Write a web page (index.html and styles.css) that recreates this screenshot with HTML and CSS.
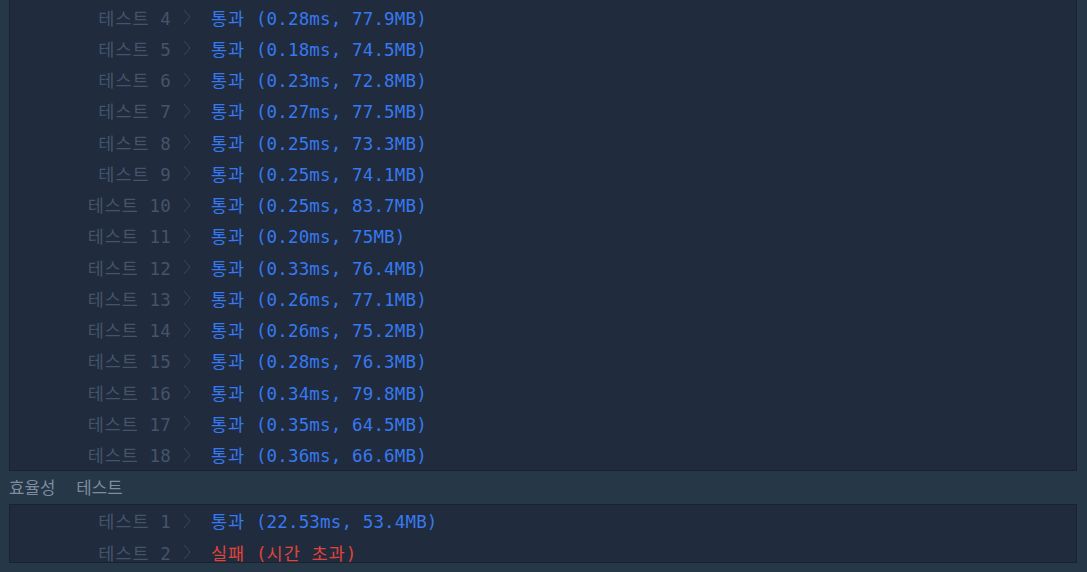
FILE: index.html
```html
<!DOCTYPE html>
<html>
<head>
    <title>채점 결과</title>
    <link rel="stylesheet" href="styles.css">
</head>
<body>
    <div class="panel panel-main">
        <div class="row"><span class="label"><span class="ko">테스트</span> 4</span><span class="arrow"><svg width="8" height="16" viewBox="0 0 8 16"><polyline points="1,1 7,8 1,15" /></svg></span><span class="res pass"><span class="ko">통과</span> (0.28ms, 77.9MB)</span></div>
        <div class="row"><span class="label"><span class="ko">테스트</span> 5</span><span class="arrow"><svg width="8" height="16" viewBox="0 0 8 16"><polyline points="1,1 7,8 1,15" /></svg></span><span class="res pass"><span class="ko">통과</span> (0.18ms, 74.5MB)</span></div>
        <div class="row"><span class="label"><span class="ko">테스트</span> 6</span><span class="arrow"><svg width="8" height="16" viewBox="0 0 8 16"><polyline points="1,1 7,8 1,15" /></svg></span><span class="res pass"><span class="ko">통과</span> (0.23ms, 72.8MB)</span></div>
        <div class="row"><span class="label"><span class="ko">테스트</span> 7</span><span class="arrow"><svg width="8" height="16" viewBox="0 0 8 16"><polyline points="1,1 7,8 1,15" /></svg></span><span class="res pass"><span class="ko">통과</span> (0.27ms, 77.5MB)</span></div>
        <div class="row"><span class="label"><span class="ko">테스트</span> 8</span><span class="arrow"><svg width="8" height="16" viewBox="0 0 8 16"><polyline points="1,1 7,8 1,15" /></svg></span><span class="res pass"><span class="ko">통과</span> (0.25ms, 73.3MB)</span></div>
        <div class="row"><span class="label"><span class="ko">테스트</span> 9</span><span class="arrow"><svg width="8" height="16" viewBox="0 0 8 16"><polyline points="1,1 7,8 1,15" /></svg></span><span class="res pass"><span class="ko">통과</span> (0.25ms, 74.1MB)</span></div>
        <div class="row"><span class="label"><span class="ko">테스트</span> 10</span><span class="arrow"><svg width="8" height="16" viewBox="0 0 8 16"><polyline points="1,1 7,8 1,15" /></svg></span><span class="res pass"><span class="ko">통과</span> (0.25ms, 83.7MB)</span></div>
        <div class="row"><span class="label"><span class="ko">테스트</span> 11</span><span class="arrow"><svg width="8" height="16" viewBox="0 0 8 16"><polyline points="1,1 7,8 1,15" /></svg></span><span class="res pass"><span class="ko">통과</span> (0.20ms, 75MB)</span></div>
        <div class="row"><span class="label"><span class="ko">테스트</span> 12</span><span class="arrow"><svg width="8" height="16" viewBox="0 0 8 16"><polyline points="1,1 7,8 1,15" /></svg></span><span class="res pass"><span class="ko">통과</span> (0.33ms, 76.4MB)</span></div>
        <div class="row"><span class="label"><span class="ko">테스트</span> 13</span><span class="arrow"><svg width="8" height="16" viewBox="0 0 8 16"><polyline points="1,1 7,8 1,15" /></svg></span><span class="res pass"><span class="ko">통과</span> (0.26ms, 77.1MB)</span></div>
        <div class="row"><span class="label"><span class="ko">테스트</span> 14</span><span class="arrow"><svg width="8" height="16" viewBox="0 0 8 16"><polyline points="1,1 7,8 1,15" /></svg></span><span class="res pass"><span class="ko">통과</span> (0.26ms, 75.2MB)</span></div>
        <div class="row"><span class="label"><span class="ko">테스트</span> 15</span><span class="arrow"><svg width="8" height="16" viewBox="0 0 8 16"><polyline points="1,1 7,8 1,15" /></svg></span><span class="res pass"><span class="ko">통과</span> (0.28ms, 76.3MB)</span></div>
        <div class="row"><span class="label"><span class="ko">테스트</span> 16</span><span class="arrow"><svg width="8" height="16" viewBox="0 0 8 16"><polyline points="1,1 7,8 1,15" /></svg></span><span class="res pass"><span class="ko">통과</span> (0.34ms, 79.8MB)</span></div>
        <div class="row"><span class="label"><span class="ko">테스트</span> 17</span><span class="arrow"><svg width="8" height="16" viewBox="0 0 8 16"><polyline points="1,1 7,8 1,15" /></svg></span><span class="res pass"><span class="ko">통과</span> (0.35ms, 64.5MB)</span></div>
        <div class="row"><span class="label"><span class="ko">테스트</span> 18</span><span class="arrow"><svg width="8" height="16" viewBox="0 0 8 16"><polyline points="1,1 7,8 1,15" /></svg></span><span class="res pass"><span class="ko">통과</span> (0.36ms, 66.6MB)</span></div>
    </div>

    <div class="section-title"><span>효율성</span><span>테스트</span></div>

    <div class="panel panel-eff">
        <div class="row"><span class="label"><span class="ko">테스트</span> 1</span><span class="arrow"><svg width="8" height="16" viewBox="0 0 8 16"><polyline points="1,1 7,8 1,15" /></svg></span><span class="res pass"><span class="ko">통과</span> (22.53ms, 53.4MB)</span></div>
        <div class="row"><span class="label"><span class="ko">테스트</span> 2</span><span class="arrow"><svg width="8" height="16" viewBox="0 0 8 16"><polyline points="1,1 7,8 1,15" /></svg></span><span class="res fail"><span class="ko">실패</span> (<span class="ko">시간</span> <span class="ko">초과</span>)</span></div>
    </div>
</body>
</html>
```

FILE: styles.css
```css
body {
    margin: 0 10px 0 9px;
    background: #263747;
    font-family: "DejaVu Sans Mono", "Noto Sans CJK KR", monospace;
    overflow: hidden;
}

.panel {
    background: #202b3d;
    border: 1px solid #19222f;
}

.panel-main {
    border-top: none;
    padding-top: 1.5px;
}

.panel-eff {
    height: 57px;
    overflow: hidden;
}

.row {
    display: flex;
    align-items: center;
    height: 31.25px;
    font-size: 17.5px;
    letter-spacing: 0.15px;
    white-space: pre;
}

.ko {
    letter-spacing: 1px;
}

.label {
    width: 161px;
    text-align: right;
    color: #45546a;
}

.arrow {
    display: flex;
    margin-left: 12px;
    margin-right: 20px;
}

.arrow polyline {
    fill: none;
    stroke: #3a475a;
    stroke-width: 1;
}

.pass {
    color: #3779f0;
}

.fail {
    color: #e0433b;
}

.section-title {
    height: 33px;
    line-height: 33px;
    font-family: "Noto Sans CJK KR", sans-serif;
    font-size: 16.8px;
    color: #7d8ca0;
}

.section-title span + span {
    margin-left: 21px;
}
```
